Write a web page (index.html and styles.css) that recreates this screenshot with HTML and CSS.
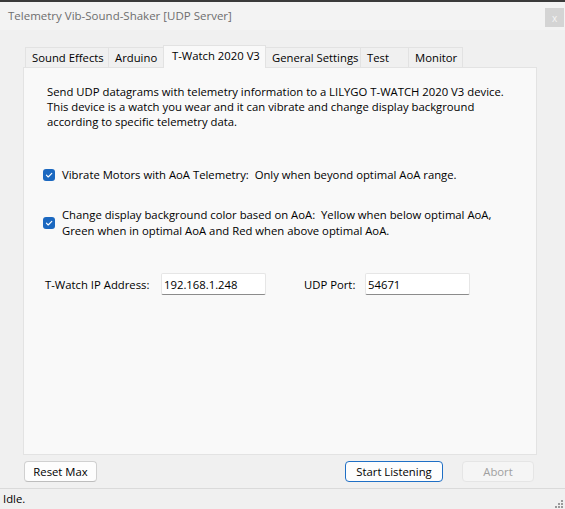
FILE: index.html
```html
<!DOCTYPE html>
<html>
<head>
<meta charset="utf-8">
<link rel="stylesheet" href="styles.css">
</head>
<body>
<div class="window">
  <div class="topstrip"></div>
  <div class="titlebar">
    <span class="title">Telemetry Vib-Sound-Shaker [UDP Server]</span>
    <span class="close">x</span>
  </div>
  <div class="content">
    <div class="tabs">
      <div class="tab w-sound">Sound Effects</div>
      <div class="tab w-arduino">Arduino</div>
      <div class="tab selected w-twatch">T-Watch 2020 V3</div>
      <div class="tab w-general">General Settings</div>
      <div class="tab w-test">Test</div>
      <div class="tab w-monitor">Monitor</div>
    </div>
    <div class="panel">
      <p class="intro">Send UDP datagrams with telemetry information to a LILYGO T-WATCH 2020 V3 device.<br>This device is a watch you wear and it can vibrate and change display background<br>according to specific telemetry data.</p>
      <div class="check row1">
        <span class="box"><svg width="12" height="12" viewBox="0 0 12 12"><path d="M3.4 6.2 L5.2 8 L8.8 4.3" fill="none" stroke="#ffffff" stroke-width="1.1" stroke-linecap="round" stroke-linejoin="round"/></svg></span>
        <span class="label">Vibrate Motors with AoA Telemetry:&nbsp; Only when beyond optimal AoA range.</span>
      </div>
      <div class="check row2">
        <span class="box"><svg width="12" height="12" viewBox="0 0 12 12"><path d="M3.4 6.2 L5.2 8 L8.8 4.3" fill="none" stroke="#ffffff" stroke-width="1.1" stroke-linecap="round" stroke-linejoin="round"/></svg></span>
        <span class="label">Change display background color based on AoA:&nbsp; Yellow when below optimal AoA,<br>Green when in optimal AoA and Red when above optimal AoA.</span>
      </div>
      <div class="fields">
        <span class="flabel ip-label">T-Watch IP Address:</span>
        <span class="input">192.168.1.248</span>
        <span class="flabel port-label">UDP Port:</span>
        <span class="input">54671</span>
      </div>
    </div>
    <div class="buttons">
      <span class="btn reset">Reset Max</span>
      <span class="spacer"></span>
      <span class="btn start">Start Listening</span>
      <span class="btn abort">Abort</span>
    </div>
  </div>
  <div class="status">
    <span class="idle">Idle.</span>
    <svg class="grip" width="10" height="10" viewBox="0 0 10 10">
      <rect x="7" y="1" width="2" height="2" fill="#9a9a9a"/>
      <rect x="4" y="4" width="2" height="2" fill="#9a9a9a"/>
      <rect x="7" y="4" width="2" height="2" fill="#9a9a9a"/>
      <rect x="1" y="7" width="2" height="2" fill="#9a9a9a"/>
      <rect x="4" y="7" width="2" height="2" fill="#9a9a9a"/>
      <rect x="7" y="7" width="2" height="2" fill="#9a9a9a"/>
    </svg>
  </div>
</div>
</body>
</html>
```
FILE: styles.css
```css
html, body {
  margin: 0;
  padding: 0;
}
body {
  background: #f0f0f0;
  font-family: "Open Sans", "Noto Sans", sans-serif;
  font-size: 11.3px;
  color: #000;
}
.window {
  width: 565px;
  height: 509px;
  display: flex;
  flex-direction: column;
  overflow: hidden;
}
.topstrip {
  height: 2px;
  flex: none;
  background: #3a3a3a;
}
.titlebar {
  height: 28px;
  flex: none;
  background: #f3f3f3;
  display: flex;
  align-items: center;
  justify-content: space-between;
  padding: 0 1px 0 8px;
}
.title {
  color: #6e6e6e;
  font-size: 11.5px;
  margin-top: -1px;
}
.close {
  width: 19px;
  height: 19px;
  background: #d4d4d4;
  color: #f4f4f4;
  font-size: 10px;
  display: flex;
  align-items: center;
  justify-content: center;
  margin-top: 3px;
}
.content {
  flex: none;
  padding: 15px 0 0 23px;
  display: flex;
  flex-direction: column;
}
.tabs {
  display: flex;
  height: 22px;
  align-items: flex-end;
  padding-left: 2px;
  position: relative;
  z-index: 1;
}
.tab {
  height: 20px;
  box-sizing: border-box;
  border: 1px solid #e2e2e2;
  border-bottom: none;
  background: #f0f0f0;
  display: flex;
  align-items: center;
  padding-left: 6px;
  margin-right: -1px;
  line-height: 1;
  white-space: nowrap;
}
.tab.selected {
  height: 23px;
  background: #f9f9f9;
  margin-bottom: -1px;
  padding-bottom: 3px;
  padding-left: 8px;
}
.w-sound { width: 84px; }
.w-arduino { width: 56px; }
.w-twatch { width: 103px; }
.w-general { width: 96px; }
.w-test { width: 49px; }
.w-monitor { width: 55px; }
.panel {
  width: 514px;
  height: 388px;
  box-sizing: border-box;
  border: 1px solid #e3e3e3;
  background: #f9f9f9;
  padding: 16px 0 0 23px;
}
.intro {
  margin: 0;
  line-height: 15px;
}
.check {
  display: flex;
  align-items: center;
  margin-left: -4px;
}
.row1 {
  margin-top: 38px;
}
.row2 {
  margin-top: 24px;
}
.box {
  width: 12px;
  height: 12px;
  border-radius: 3px;
  background: #1b68c0;
  display: flex;
  flex: none;
}
.label {
  margin-left: 7px;
  line-height: 16px;
}
.fields {
  display: flex;
  align-items: center;
  margin-top: 34px;
  margin-left: -2px;
}
.flabel {
  flex: none;
  white-space: nowrap;
}
.ip-label {
  width: 116px;
}
.port-label {
  width: 61px;
  margin-left: 38px;
}
.input {
  width: 105px;
  height: 22px;
  box-sizing: border-box;
  background: #fff;
  border: 1px solid #e6e6e6;
  border-bottom: 1px solid #8c8c8c;
  border-radius: 2px;
  padding-left: 2px;
  display: flex;
  align-items: center;
}
.buttons {
  display: flex;
  margin-top: 6px;
  height: 21px;
  padding-right: 31px;
}
.spacer {
  flex: 1;
}
.btn {
  height: 21px;
  box-sizing: border-box;
  border: 1px solid #d0d0d0;
  border-bottom-color: #bdbdbd;
  border-radius: 4px;
  background: #fdfdfd;
  display: flex;
  align-items: center;
  justify-content: center;
  margin-left: 1px;
  white-space: nowrap;
}
.reset { width: 73px; }
.start {
  width: 98px;
  border: 1px solid #1f6fc5;
}
.abort {
  width: 72px;
  margin-left: 19px;
  color: #a0a0a0;
  background: #f5f5f5;
  border-color: #e5e5e5;
}
.status {
  margin-top: 6px;
  flex: 1;
  border-top: 1px solid #dadada;
  display: flex;
  align-items: center;
  justify-content: space-between;
  padding: 0 1px 0 3px;
}
.idle {
  margin-top: -2px;
}
.grip {
  align-self: flex-end;
}
```
